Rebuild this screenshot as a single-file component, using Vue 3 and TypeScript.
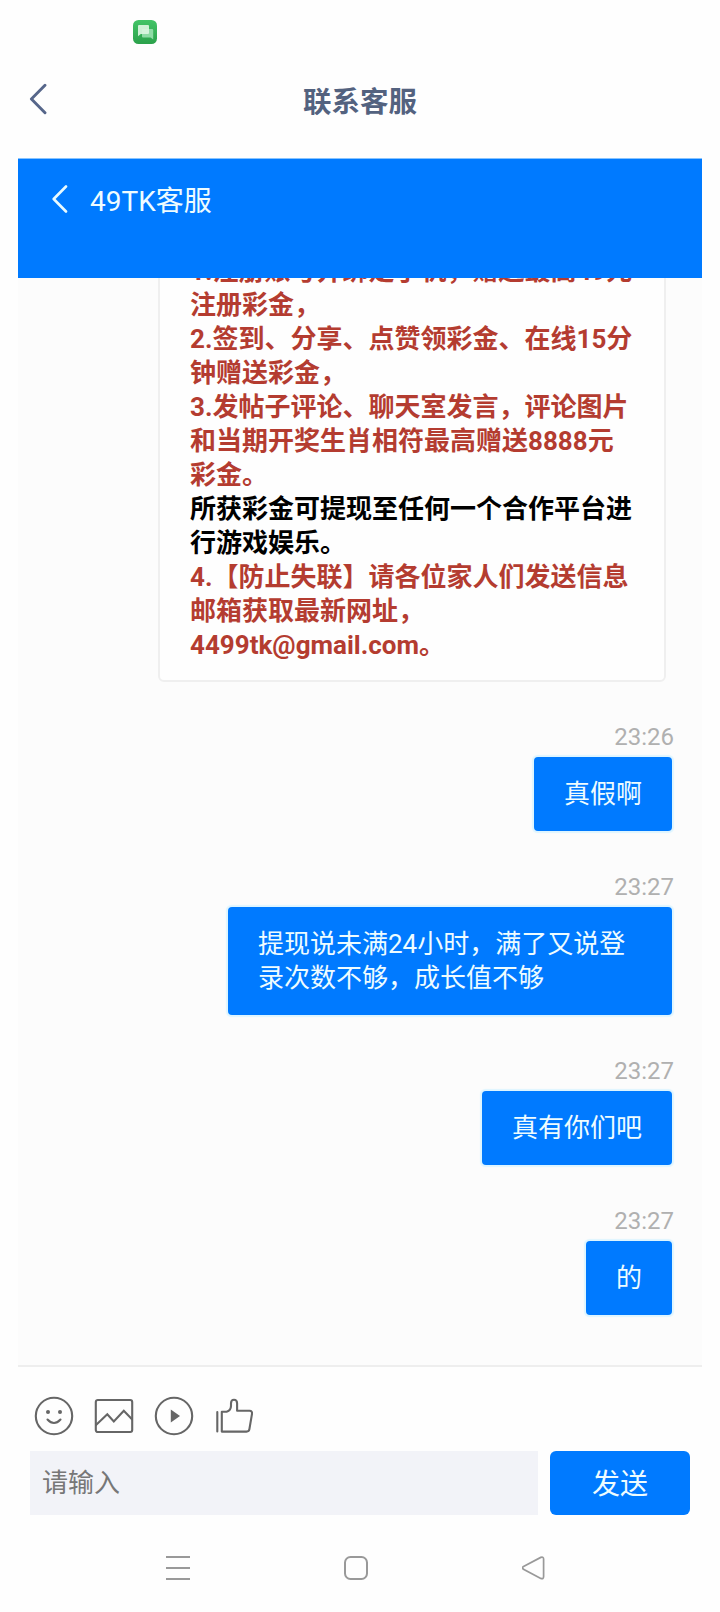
<script setup lang="ts">
interface NoticeLine {
  text: string
  dark?: boolean
}
interface Message {
  time: string
  lines: string[]
  wide?: boolean
}

const notice: NoticeLine[] = [
  { text: '1.注册账号并绑定手机，赠送最高49元' },
  { text: '注册彩金，' },
  { text: '2.签到、分享、点赞领彩金、在线15分' },
  { text: '钟赠送彩金，' },
  { text: '3.发帖子评论、聊天室发言，评论图片' },
  { text: '和当期开奖生肖相符最高赠送8888元' },
  { text: '彩金。' },
  { text: '所获彩金可提现至任何一个合作平台进', dark: true },
  { text: '行游戏娱乐。', dark: true },
  { text: '4.【防止失联】请各位家人们发送信息' },
  { text: '邮箱获取最新网址，' },
  { text: '4499tk@gmail.com。' },
]

const messages: Message[] = [
  { time: '23:26', lines: ['真假啊'] },
  { time: '23:27', lines: ['提现说未满24小时，满了又说登', '录次数不够，成长值不够'], wide: true },
  { time: '23:27', lines: ['真有你们吧'] },
  { time: '23:27', lines: ['的'] },
]
</script>

<template>
  <div class="page">
    <div class="status">
      <svg class="app-icon" width="24" height="24" viewBox="0 0 24 24">
        <defs>
          <linearGradient id="appGreen" x1="0" y1="0" x2="0" y2="1">
            <stop offset="0" stop-color="#43c467" />
            <stop offset="1" stop-color="#2ba14b" />
          </linearGradient>
        </defs>
        <rect width="24" height="24" rx="5.5" fill="url(#appGreen)" />
        <path d="M10 9h9.2q1 0 1 1v9.600l-2.600-2H10q-1 0-1-1V10q0-1 1-1z" fill="#8fdca6" />
        <path d="M6 5h9q1 0 1 1v7q0 1-1 1H7.800L5 16.300V6q0-1 1-1z" fill="#dcf5e2" fill-opacity=".92" />
      </svg>
    </div>

    <header class="topbar">
      <svg class="top-back" width="18" height="32" viewBox="0 0 18 32">
        <path d="M16 2.200L2.400 16 16 29.800" fill="none" stroke="#56668a" stroke-width="2.900" stroke-linecap="round" stroke-linejoin="round" />
      </svg>
      <h1>联系客服</h1>
    </header>

    <main class="chat">
      <div class="chat-head">
        <svg width="16" height="28" viewBox="0 0 16 28">
          <path d="M14 1.500L1.700 14 14 26.500" fill="none" stroke="#e9fbff" stroke-width="2.600" stroke-linecap="round" stroke-linejoin="round" />
        </svg>
        <span>49TK客服</span>
      </div>

      <div class="scroll">
        <section class="notice">
          <p v-for="(line, i) in notice" :key="i" :class="{ dark: line.dark }">{{ line.text }}</p>
        </section>
        <div v-for="(m, i) in messages" :key="i" class="message">
          <time>{{ m.time }}</time>
          <div class="bubble" :class="{ wide: m.wide }">
            <p v-for="l in m.lines" :key="l">{{ l }}</p>
          </div>
        </div>
      </div>
    </main>

    <footer class="composer">
      <div class="tools">
        <svg viewBox="0 0 40 40">
          <circle cx="20" cy="20" r="18.200" />
          <path d="M13.500 23.500q6.500 7 13 0" />
          <circle class="solid" cx="14" cy="16" r="2" />
          <circle class="solid" cx="26" cy="16" r="2" />
        </svg>
        <svg viewBox="0 0 40 40">
          <rect x="1.800" y="4" width="36.400" height="32" rx="2" />
          <path d="M2 29l11.300-10.700 6.500 7.200 10-10.700 8.200 8.400" stroke-linejoin="miter" />
        </svg>
        <svg viewBox="0 0 40 40">
          <circle cx="20" cy="20" r="18.200" />
          <path class="solid" d="M16.800 13.500v13L26 20z" />
        </svg>
        <svg viewBox="0 0 40 40">
          <path d="M3.300 16v19.500M7.800 35.600V15.800h4.800q4.400-1.300 4.400-6V7.200q0-3.500 3-3.500t3.100 3.500v7.600H35.600q2.800 0 2.400 3l-2.600 15.400q-.4 2.400-2.900 2.400z" />
        </svg>
      </div>
      <div class="entry">
        <div class="field">请输入</div>
        <button type="button">发送</button>
      </div>
    </footer>

    <nav class="sysnav">
      <svg width="24" height="26" viewBox="0 0 24 26"><path d="M0 2h24M0 13h24M0 24h24" /></svg>
      <svg width="24" height="26" viewBox="0 0 24 26"><rect x="1" y="2" width="22" height="22" rx="5.500" /></svg>
      <svg width="24" height="26" viewBox="0 0 24 26">
        <path d="M1.500 11.400L18.800 2.400Q21.600 1.400 21.600 4.200V21.600Q21.600 24.500 18.800 23.400L1.500 14.300Q-.4 12.800 1.500 11.400z" stroke-width="1.700" />
      </svg>
    </nav>
  </div>
</template>

<style>
body {
  background: #fefefe;
}
</style>

<style scoped>
.page {
  width: 720px;
  height: 1612px;
  overflow: hidden;
  display: flex;
  flex-direction: column;
  background: #fefefe;
  font-family: Roboto, "Noto Sans CJK SC", sans-serif;
}
p,
h1 {
  margin: 0;
}
.status {
  height: 64px;
  box-sizing: border-box;
  padding: 20px 0 0 133px;
}
.app-icon {
  display: block;
}
.topbar {
  height: 94px;
  display: grid;
  grid-template-columns: 60px 1fr 60px;
}
.top-back {
  margin: 19px 0 0 29px;
}
.topbar h1 {
  text-align: center;
  font-size: 28.500px;
  line-height: 40px;
  padding-top: 19px;
  color: #53627f;
  font-weight: 700;
}
.chat {
  height: 1209px;
  box-sizing: border-box;
  margin: 0 18px;
  display: flex;
  flex-direction: column;
  background: #fcfcfc;
  border-bottom: 2px solid #eeeeee;
}
.chat-head {
  flex: none;
  height: 120px;
  box-sizing: border-box;
  border-top: 1px solid #86c3ff;
  background: #007aff;
  display: flex;
  align-items: flex-start;
  gap: 22px;
  padding: 26px 0 0 34px;
  color: #eefcff;
  font-size: 28px;
  line-height: 34px;
}
.scroll {
  flex: 1;
  min-height: 0;
  overflow: hidden;
  display: flex;
  flex-direction: column;
  align-items: flex-end;
}
.notice {
  flex: none;
  width: 508px;
  box-sizing: border-box;
  margin: -50px 36px 36px 0;
  padding: 24px 0 18px 30px;
  border: 2px solid #efefef;
  border-radius: 6px;
  background: #fefefe;
  color: #b43c30;
  font-size: 26px;
  font-weight: 700;
  line-height: 34px;
  white-space: nowrap;
}
.notice .dark {
  color: #000;
}
.message {
  display: flex;
  flex-direction: column;
  align-items: flex-end;
  margin: 0 30px 37px 0;
}
.message time {
  height: 39px;
  line-height: 39px;
  margin-right: -2px;
  font-size: 24px;
  color: #b0b0b0;
}
.bubble {
  box-sizing: border-box;
  padding: 20px 30px;
  border-radius: 4px;
  background: #007aff;
  box-shadow: 0 0 1px 1.500px #def5ff;
  color: #eefcff;
  font-size: 26px;
  line-height: 34px;
  white-space: nowrap;
}
.bubble.wide {
  width: 444px;
}
.composer {
  height: 148px;
  padding: 0 30px;
}
.tools {
  display: flex;
  gap: 20px;
  padding: 29px 0 15px 4px;
}
.tools svg {
  width: 40px;
  height: 40px;
  fill: none;
  stroke: #666;
  stroke-width: 2.100;
  stroke-linejoin: round;
  stroke-linecap: round;
}
.tools .solid {
  fill: #666;
  stroke: none;
}
.entry {
  display: flex;
  gap: 12px;
  height: 64px;
}
.field {
  flex: 1;
  padding-left: 12px;
  background: #f2f3f8;
  color: #777;
  font-size: 26px;
  line-height: 65px;
}
.entry button {
  width: 140px;
  padding: 0 0 2px;
  border: 0;
  border-radius: 6px;
  background: #007aff;
  color: #eefcff;
  font: inherit;
  font-size: 28px;
}
.sysnav {
  flex: 1;
  display: flex;
  gap: 154px;
  padding: 40px 0 0 166px;
}
.sysnav svg {
  fill: none;
  stroke: #999;
  stroke-width: 2;
}
</style>
